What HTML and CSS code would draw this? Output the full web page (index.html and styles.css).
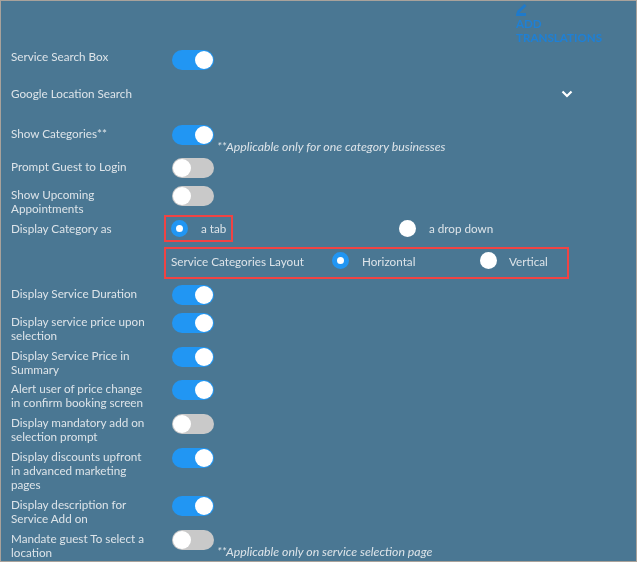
FILE: index.html
```html
<!DOCTYPE html>
<html lang="en">
<head>
  <meta charset="UTF-8">
  <title>Booking settings</title>
  <link rel="stylesheet" href="styles.css">
</head>
<body>

  <div class="page">

    <div class="translations">
      <svg class="pencil" width="11" height="12" viewBox="0 0 11 12">
        <path d="M9.5 1 L2.5 7.5 L1.5 10.5 L10 10.5" fill="none" stroke="#1f7acb" stroke-width="2.8"/>
      </svg>
      <div>ADD</div>
      <div>TRANSLATIONS</div>
    </div>

    <div class="row row-search">
      <div class="label">Service Search Box</div>
      <span class="toggle on"></span>
    </div>

    <div class="row row-google">
      <div class="label">Google Location Search</div>
      <svg class="chevron" width="12" height="8" viewBox="0 0 12 8">
        <path d="M1.5 1.5 L6 6 L10.5 1.5" fill="none" stroke="#fff" stroke-width="2.2"/>
      </svg>
    </div>

    <div class="row row-note">
      <div class="label">Show Categories**</div>
      <span class="toggle on"></span>
      <span class="note">**Applicable only for one category businesses</span>
    </div>

    <div class="row row-single">
      <div class="label">Prompt Guest to Login</div>
      <span class="toggle"></span>
    </div>

    <div class="row">
      <div class="label">Show Upcoming Appointments</div>
      <span class="toggle"></span>
    </div>

    <div class="row row-category">
      <div class="label">Display Category as</div>
      <div class="tab-box">
        <span class="radio on"></span>
        <span>a tab</span>
      </div>
      <div class="dropdown-opt">
        <span class="radio"></span>
        <span>a drop down</span>
      </div>
    </div>

    <div class="layout-box">
      <span class="layout-title">Service Categories Layout</span>
      <div class="layout-opt horizontal">
        <span class="radio on"></span>
        <span>Horizontal</span>
      </div>
      <div class="layout-opt">
        <span class="radio"></span>
        <span>Vertical</span>
      </div>
    </div>

    <div class="row row-single">
      <div class="label">Display Service Duration</div>
      <span class="toggle on"></span>
    </div>

    <div class="row">
      <div class="label">Display service price upon selection</div>
      <span class="toggle on"></span>
    </div>

    <div class="row row-tight">
      <div class="label">Display Service Price in Summary</div>
      <span class="toggle on"></span>
    </div>

    <div class="row">
      <div class="label">Alert user of price change in confirm booking screen</div>
      <span class="toggle on"></span>
    </div>

    <div class="row">
      <div class="label">Display mandatory add on selection prompt</div>
      <span class="toggle"></span>
    </div>

    <div class="row">
      <div class="label">Display discounts upfront in advanced marketing pages</div>
      <span class="toggle on"></span>
    </div>

    <div class="row">
      <div class="label">Display description for Service Add on</div>
      <span class="toggle on"></span>
    </div>

    <div class="row">
      <div class="label">Mandate guest To select a location</div>
      <span class="toggle"></span>
      <span class="note">**Applicable only on service selection page</span>
    </div>

  </div>

</body>
</html>
```

FILE: styles.css
```css
html, body {
  margin: 0;
  height: 100%;
  overflow: hidden;
  background: #4a7793;
}
.page {
  box-sizing: border-box;
  width: 637px;
  height: 562px;
  padding: 3px 0 0 10px;
  background: #4a7793;
  border: 1px solid #a9a29b;
  font-family: Lato, "Open Sans", sans-serif;
  font-size: 11.7px;
  line-height: 14px;
  color: #dde4e9;
  overflow: hidden;
  filter: blur(0.45px);
}
.translations {
  height: 46px;
  padding-left: 505px;
  font-size: 11.6px;
  font-weight: 700;
  color: #1e80d6;
}
.pencil {
  display: block;
  margin-bottom: 1px;
}
.row {
  display: flex;
  gap: 25px;
  margin-bottom: 5px;
}
.row-tight {
  margin-bottom: 4px;
}
.label {
  width: 136px;
  flex-shrink: 0;
  padding-top: 1px;
}
.row-search {
  height: 20px;
  margin-bottom: 16px;
}
.row-search .label {
  padding-top: 0;
  margin-top: -1px;
}
.row-google {
  height: 14px;
  margin-bottom: 25px;
}
.row-google .label {
  padding-top: 0;
}
.chevron {
  margin-left: 389px;
  margin-top: 4px;
}
.row-note {
  height: 28px;
}
.row-single {
  height: 23px;
}
.row-category {
  gap: 0;
  height: 27px;
  margin-top: -5px;
  align-items: center;
}
.row-category .label {
  width: 153px;
  padding-bottom: 1px;
  padding-top: 0;
}
.toggle {
  position: relative;
  flex-shrink: 0;
  display: block;
  box-sizing: border-box;
  width: 42px;
  height: 20px;
  border-radius: 10px;
  background: #c9c9c9;
}
.toggle::after {
  content: "";
  position: absolute;
  top: 1px;
  left: 1px;
  width: 18px;
  height: 18px;
  border-radius: 50%;
  background: #fff;
}
.toggle.on {
  background: #2196f3;
}
.toggle.on::after {
  left: 23px;
}
.note {
  margin: 15px 0 0 -22px;
  font-style: italic;
  font-size: 12.3px;
  white-space: nowrap;
}
.radio {
  display: block;
  flex-shrink: 0;
  box-sizing: border-box;
  width: 17px;
  height: 17px;
  border-radius: 50%;
  background: #fff;
}
.radio.on {
  border: 5px solid #2196f3;
}
.tab-box {
  box-sizing: border-box;
  display: flex;
  align-items: center;
  gap: 13px;
  width: 69px;
  height: 27px;
  padding-left: 5px;
  padding-bottom: 1px;
  border: 2px solid #f04343;
}
.dropdown-opt {
  display: flex;
  align-items: center;
  gap: 13px;
  margin-left: 166px;
  padding-bottom: 1px;
}
.layout-box {
  box-sizing: border-box;
  display: flex;
  align-items: center;
  width: 405px;
  height: 32px;
  margin: 0 0 6px 153px;
  padding: 0 0 5px 5px;
  border: 2px solid #f04343;
}
.layout-title {
  width: 161px;
}
.layout-opt {
  display: flex;
  align-items: center;
  gap: 13px;
}
.layout-opt:last-child {
  gap: 12px;
}
.horizontal {
  width: 148px;
}
```
